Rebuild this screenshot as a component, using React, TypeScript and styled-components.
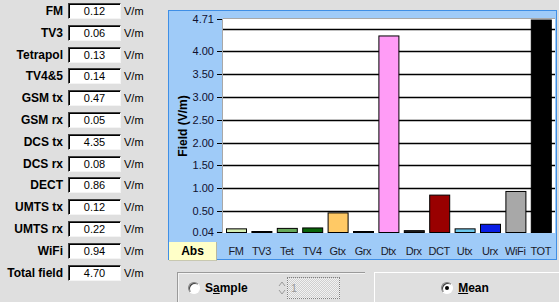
import React from "react";
import styled, { createGlobalStyle } from "styled-components";

const GlobalStyle = createGlobalStyle`
  html, body {
    margin: 0;
    padding: 0;
    background: #dfdfdf;
    font-family: "Liberation Sans", Arial, sans-serif;
    overflow: hidden;
  }
`;

interface Reading {
  label: string;
  short: string;
  value: number;
  color: string;
}

const readings: Reading[] = [
  { label: "FM", short: "FM", value: 0.12, color: "#d6efb4" },
  { label: "TV3", short: "TV3", value: 0.06, color: "#404040" },
  { label: "Tetrapol", short: "Tet", value: 0.13, color: "#66a85a" },
  { label: "TV4&5", short: "TV4", value: 0.14, color: "#0a640a" },
  { label: "GSM tx", short: "Gtx", value: 0.47, color: "#ffc965" },
  { label: "GSM rx", short: "Grx", value: 0.05, color: "#808080" },
  { label: "DCS tx", short: "Dtx", value: 4.35, color: "#ff9cf6" },
  { label: "DCS rx", short: "Drx", value: 0.08, color: "#202020" },
  { label: "DECT", short: "DCT", value: 0.86, color: "#990000" },
  { label: "UMTS tx", short: "Utx", value: 0.12, color: "#6cc8ec" },
  { label: "UMTS rx", short: "Urx", value: 0.22, color: "#0a1ee6" },
  { label: "WiFi", short: "WiFi", value: 0.94, color: "#a8a8a8" },
  { label: "Total field", short: "TOT", value: 4.7, color: "#000000" },
];

const MIN = 0.04;
const BASE_Y = 221;
const SCALE = 45.6;
const toY = (v: number) => BASE_Y - (v - MIN) * SCALE;

const ticks = [4.71, 4.0, 3.5, 3.0, 2.5, 2.0, 1.5, 1.0, 0.5, 0.04];
const gridLines = [4.5, 4.0, 3.5, 3.0, 2.5, 2.0, 1.5, 1.0, 0.5];

const Page = styled.div`
  width: 559px;
  height: 302px;
  overflow: hidden;
  display: grid;
  grid-template-columns: 168px 391px;
  grid-template-rows: 302px;
`;

const ReadingList = styled.div`
  padding-top: 3px;
  display: flex;
  flex-direction: column;
  gap: 5.8px;
`;

const Row = styled.div`
  display: flex;
  align-items: center;
  height: 16px;
`;

const Label = styled.div`
  width: 63px;
  margin-right: 5px;
  text-align: right;
  font-weight: bold;
  font-size: 12px;
  color: #000;
  white-space: nowrap;
`;

const ValueBox = styled.div`
  box-sizing: border-box;
  width: 53px;
  height: 16px;
  background: #fff;
  border-top: 1px solid #404040;
  border-left: 1px solid #404040;
  border-bottom: 1px solid #f4f4f4;
  border-right: 1px solid #f4f4f4;
  box-shadow: inset 1px 1px 0 #000;
  font-size: 11px;
  line-height: 14px;
  text-align: center;
  color: #000;
`;

const Unit = styled.div`
  margin-left: 3px;
  font-size: 11px;
  color: #000;
`;

const RightColumn = styled.div`
  padding-top: 10px;
  display: flex;
  flex-direction: column;
  height: 302px;
  box-sizing: border-box;
  overflow: hidden;
`;

const ChartPanel = styled.div`
  box-sizing: border-box;
  width: 389px;
  height: 250px;
  flex-shrink: 0;
  background: #9fcbf8;
  border: 1px solid #3f8fe6;
  display: flex;
  flex-direction: column;
`;

const Plot = styled.svg`
  display: block;
  flex-shrink: 0;
  width: 387px;
  height: 231px;
  font-family: "Liberation Sans", Arial, sans-serif;
`;

const TabRow = styled.div`
  display: flex;
  height: 17px;
  flex-shrink: 0;
`;

const AbsTab = styled.div`
  box-sizing: border-box;
  width: 48px;
  height: 19px;
  background: #ffffc8;
  border-right: 1px solid #b8b8a0;
  border-bottom: 1px solid #c8c8b0;
  font-weight: bold;
  font-size: 12px;
  line-height: 19px;
  text-align: center;
  color: #000;
  position: relative;
  z-index: 1;
`;

const Categories = styled.div`
  display: grid;
  grid-template-columns: repeat(13, 25.4px);
  padding-left: 6.3px;
`;

const Category = styled.div`
  font-size: 11px;
  line-height: 18px;
  text-align: center;
  letter-spacing: -0.4px;
  color: #1a1a2a;
  white-space: nowrap;
`;

const BottomBar = styled.div`
  margin-top: 12px;
  display: flex;
  gap: 9px;
  padding-left: 9px;
  height: 30px;
  flex-shrink: 0;
`;

const SamplePanel = styled.div`
  box-sizing: border-box;
  width: 188px;
  height: 30px;
  border-top: 1px solid #9a9a9a;
  border-left: 1px solid #9a9a9a;
  box-shadow: inset 1px 1px 0 #f4f4f4;
  display: flex;
  align-items: center;
  padding-left: 10px;
`;

const MeanButton = styled.div`
  box-sizing: border-box;
  flex: 1;
  height: 30px;
  border-top: 1px solid #fff;
  border-left: 1px solid #fff;
  display: flex;
  align-items: center;
  justify-content: center;
  padding-right: 4px;
`;

const Radio = styled.span<{ checked?: boolean }>`
  box-sizing: border-box;
  position: relative;
  width: 12px;
  height: 12px;
  border-radius: 50%;
  background: #fff;
  border-top: 1px solid #808080;
  border-left: 1px solid #808080;
  border-bottom: 1px solid #fff;
  border-right: 1px solid #fff;
  box-shadow: inset 1px 1px 0 #404040;
  flex-shrink: 0;
  &::after {
    content: "";
    display: ${({ checked }) => (checked ? "block" : "none")};
    position: absolute;
    left: 3px;
    top: 3px;
    width: 4px;
    height: 4px;
    border-radius: 50%;
    background: #000;
  }
`;

const RadioText = styled.span<{ width?: number }>`
  margin-left: 5px;
  font-weight: bold;
  font-size: 12px;
  color: #000;
  ${({ width }) => (width ? `width: ${width}px;` : "")}
`;

const Spinner = styled.svg`
  display: block;
  width: 10px;
  height: 18px;
`;

const CountField = styled.div`
  box-sizing: border-box;
  width: 53px;
  height: 22px;
  border: 1px dotted #808080;
  background: repeating-conic-gradient(#cfcfcf 0 25%, #f2f2f2 0 50%) 0 0 / 2px 2px;
  font-size: 11px;
  line-height: 20px;
  padding-left: 3px;
  color: #9a9a9a;
`;

const Chart: React.FC = () => (
  <Plot viewBox="0 0 387 231">
    <rect x={54} y={8} width={332} height={214} fill="#fff" />
    <line x1={53.5} y1={8} x2={53.5} y2={222} stroke="#a8a8a8" />
    <line x1={54} y1={7.5} x2={386} y2={7.5} stroke="#a8a8a8" />
    {gridLines.map((v) => (
      <line
        key={v}
        x1={54}
        x2={386}
        y1={Math.round(toY(v)) + 0.5}
        y2={Math.round(toY(v)) + 0.5}
        stroke="#000"
        strokeWidth={1.3}
      />
    ))}
    {ticks.map((v) => (
      <g key={v}>
        <line
          x1={48}
          x2={53}
          y1={Math.round(toY(v)) + 0.5}
          y2={Math.round(toY(v)) + 0.5}
          stroke="#000"
        />
        <text
          x={45}
          y={Math.round(toY(v)) + 4}
          fontSize={11}
          textAnchor="end"
          fill="#101030"
        >
          {v.toFixed(2)}
        </text>
      </g>
    ))}
    {readings.map((r, i) => {
      const top = Math.min(toY(r.value), BASE_Y - 1);
      return (
        <rect
          key={r.short}
          x={57.5 + i * 25.4}
          y={top + 0.5}
          width={20}
          height={Math.max(BASE_Y - top, 1)}
          fill={r.color}
          stroke="#000"
          strokeWidth={1}
        />
      );
    })}
    <text
      transform="translate(18 115) rotate(-90)"
      fontSize={12}
      fontWeight="bold"
      textAnchor="middle"
      fill="#000"
    >
      Field (V/m)
    </text>
  </Plot>
);

const App: React.FC = () => (
  <>
    <GlobalStyle />
    <Page>
      <ReadingList>
        {readings.map((r) => (
          <Row key={r.label}>
            <Label>{r.label}</Label>
            <ValueBox>{r.value.toFixed(2)}</ValueBox>
            <Unit>V/m</Unit>
          </Row>
        ))}
      </ReadingList>
      <RightColumn>
        <ChartPanel>
          <Chart />
          <TabRow>
            <AbsTab>Abs</AbsTab>
            <Categories>
              {readings.map((r) => (
                <Category key={r.short}>{r.short}</Category>
              ))}
            </Categories>
          </TabRow>
        </ChartPanel>
        <BottomBar>
          <SamplePanel>
            <Radio />
            <RadioText width={72}>
              S<u>a</u>mple
            </RadioText>
            <Spinner viewBox="0 0 10 18">
              <path d="M2 7 L5 3 L8 7" fill="none" stroke="#9a9a9a" />
              <path d="M2 11 L5 15 L8 11" fill="none" stroke="#9a9a9a" />
            </Spinner>
            <CountField>1</CountField>
          </SamplePanel>
          <MeanButton>
            <Radio checked />
            <RadioText>
              <u>M</u>ean
            </RadioText>
          </MeanButton>
        </BottomBar>
      </RightColumn>
    </Page>
  </>
);

export default App;
